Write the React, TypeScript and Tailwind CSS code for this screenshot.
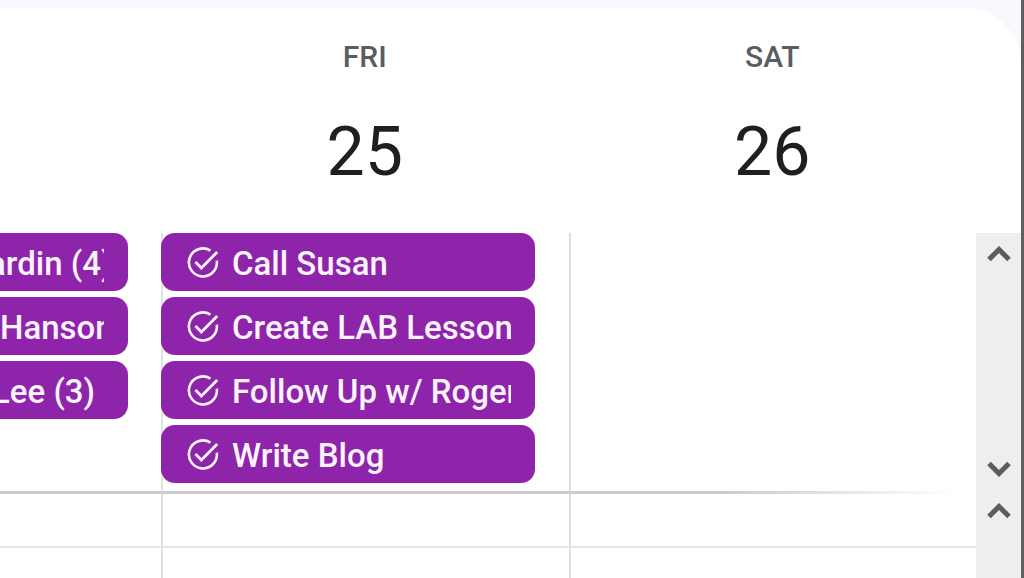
type CalendarEvent = {
  title: string
  inset?: string
}

const thursday: CalendarEvent[] = [
  { title: 'ardin (4)', inset: '-ml-3' },
  { title: 'Hanson' },
  { title: 'Lee (3)', inset: '-ml-2' },
]

const friday: CalendarEvent[] = [
  { title: 'Call Susan' },
  { title: 'Create LAB Lesson' },
  { title: 'Follow Up w/ Roger' },
  { title: 'Write Blog' },
]

function TaskIcon() {
  return (
    <svg className="h-8 w-8 shrink-0" viewBox="0 0 32 32" fill="none" aria-hidden>
      <path
        d="M23.4 4.6A14 14 0 1 0 29.8 14.7"
        stroke="currentColor"
        strokeWidth={2.6}
      />
      <path d="M8.4 16l6 6L30.2 6" stroke="currentColor" strokeWidth={2.8} />
    </svg>
  )
}

function Chevron({ up = false }: { up?: boolean }) {
  return (
    <svg className="h-5 w-6" viewBox="0 0 24 20" fill="none" aria-hidden>
      <path
        d={up ? 'M2 16.5L12 6.5l10 10' : 'M2 3.5l10 10 10-10'}
        stroke="currentColor"
        strokeWidth={5}
      />
    </svg>
  )
}

function DayHeader({ name, date }: { name: string; date: number }) {
  return (
    <div className="flex flex-col items-center">
      <span className="text-[30px] leading-10 font-medium text-[#5a5c60]">{name}</span>
      <button type="button" className="mt-[35px] text-[68px] leading-20 text-[#1f1f1f]">
        {date}
      </button>
    </div>
  )
}

// Event that started off the left edge of the view
function CutEvent({ title, inset = 'ml-0' }: CalendarEvent) {
  return (
    <button
      type="button"
      className="block h-[58px] w-full overflow-hidden rounded-r-[14px] bg-[#8e24aa] pt-1 pr-6 text-left text-[#fbf3fd]"
    >
      <span className="block overflow-hidden text-[33px] leading-[54px] font-medium whitespace-nowrap">
        <span className={inset}>{title}</span>
      </span>
    </button>
  )
}

function TaskEvent({ title }: CalendarEvent) {
  return (
    <button
      type="button"
      className="flex h-[58px] w-full items-center gap-[13px] rounded-[14px] bg-[#8e24aa] pr-6 pl-[26px] text-left text-[#fbf3fd]"
    >
      <TaskIcon />
      <span className="min-w-0 flex-1 overflow-hidden pt-1 text-[33px] leading-[54px] font-medium whitespace-nowrap">
        {title}
      </span>
    </button>
  )
}

export default function App() {
  return (
    <div className="flex min-h-screen border-r-[3px] border-[#5f5f5f] bg-[#f8f9fe] pt-2 font-['Roboto',sans-serif]">
      <main className="flex min-w-0 flex-1 flex-col overflow-hidden rounded-tr-[56px] bg-white">
        <header className="mr-[45px] grid grid-cols-[161px_1fr_1fr] pt-[29px] pb-[41px]">
          <div />
          <DayHeader name="FRI" date={25} />
          <DayHeader name="SAT" date={26} />
        </header>

        <section aria-label="All day" className="flex">
          <div className="min-w-0 flex-1">
            <div className="grid grid-cols-[161px_1fr_1fr]">
              <div className="flex flex-col gap-1.5 pr-[33px]">
                {thursday.map((event) => (
                  <CutEvent key={event.title} {...event} />
                ))}
              </div>
              <div className="min-w-0 border-l-2 border-[#dfe5e3] pr-[34px] pb-2">
                <div className="-ml-0.5 flex flex-col gap-1.5">
                  {friday.map((event) => (
                    <TaskEvent key={event.title} {...event} />
                  ))}
                </div>
              </div>
              <div className="border-l-2 border-[#dfdfe1]" />
            </div>
            <div className="h-[3px] bg-linear-to-r from-[#cdcdcd] from-75% to-white to-98%" />
          </div>
          <div className="flex w-[45px] flex-col items-center justify-between bg-[#eeeeee] pt-2.5 pb-3.5 text-[#5c5c5c]">
            <button type="button" aria-label="Scroll all-day events up">
              <Chevron up />
            </button>
            <button type="button" aria-label="Scroll all-day events down">
              <Chevron />
            </button>
          </div>
        </section>

        <section aria-label="Hours" className="flex flex-1">
          <div className="grid flex-1 grid-cols-[161px_1fr_1fr] grid-rows-[54px_1fr]">
            <div className="border-b-2 border-[#e2e7eb]" />
            <div className="border-b-2 border-l-2 border-b-[#e2e7eb] border-l-[#dfdfe1]" />
            <div className="border-b-2 border-l-2 border-b-[#e2e7eb] border-l-[#dfdfe1]" />
            <div />
            <div className="border-l-2 border-[#dfdfe1]" />
            <div className="border-l-2 border-[#dfdfe1]" />
          </div>
          <div className="flex w-[45px] flex-col items-center bg-[#eeeeee] pt-1.5 text-[#5c5c5c]">
            <button type="button" aria-label="Scroll hours up">
              <Chevron up />
            </button>
          </div>
        </section>
      </main>
    </div>
  )
}
